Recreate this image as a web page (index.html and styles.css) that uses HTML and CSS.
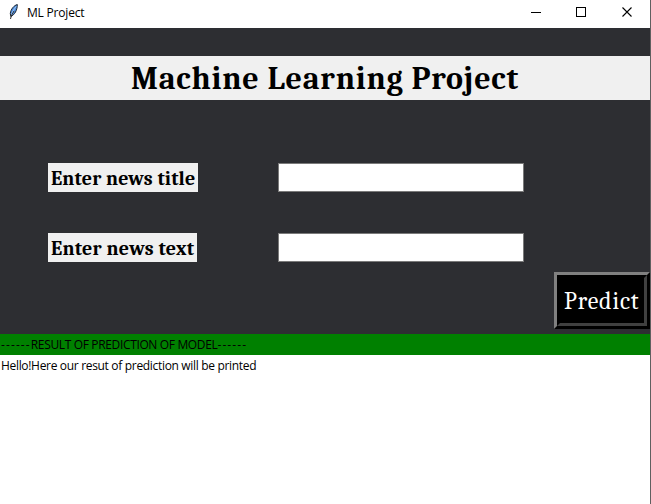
FILE: index.html
```html
<!DOCTYPE html>
<html lang="en">
<head>
<meta charset="utf-8">
<title>ML Project</title>
<link rel="stylesheet" href="styles.css">
</head>
<body>
<div class="window">
  <header class="titlebar">
    <svg class="feather" width="12" height="16" viewBox="0 0 12 16">
      <path d="M9.300 .5C6 1.500 2.800 5 2.300 9.500L2.800 12.500C6.500 11 9.500 6 9.300 .5Z" fill="#4f8fdf" stroke="#1d2733"/>
      <path d="M8 2.500C6 5 4.500 8 3.500 11" fill="none" stroke="#a9cdf5"/>
      <path d="M6 7C4.500 9.500 3 12 2.500 15" fill="none" stroke="#303030"/>
    </svg>
    <span class="caption">ML Project</span>
    <svg class="controls" width="137" height="28" viewBox="0 0 137 28" fill="none" stroke="#000" shape-rendering="crispEdges">
      <path d="M18 12.500h10"/>
      <rect x="63.500" y="7.500" width="9" height="9"/>
      <path d="M109.500 7.500l9 9M118.500 7.500l-9 9" shape-rendering="auto" stroke-width="1.100"/>
    </svg>
  </header>
  <main class="panel">
    <h1 class="heading">Machine Learning Project</h1>
    <div class="row">
      <label class="label label-title" for="t1">Enter news title</label>
      <input class="entry" id="t1" type="text">
    </div>
    <div class="row">
      <label class="label label-text" for="t2">Enter news text</label>
      <input class="entry" id="t2" type="text">
    </div>
    <button class="predict"><span class="predict-face">Predict</span></button>
  </main>
  <div class="result-title"><span class="dashes">------</span><span class="result-name">RESULT OF PREDICTION OF MODEL</span><span class="dashes">------</span></div>
  <div class="result-text">Hello!Here our resut of prediction will be printed</div>
</div>
</body>
</html>
```
FILE: styles.css
```css
* { box-sizing: border-box; }
body { margin: 0; background: #fff; font-family: "Open Sans", "Noto Sans", sans-serif; font-size: 12px; color: #000; }
.window { width: 651px; height: 504px; border-right: 1px solid #606060; overflow: hidden; white-space: nowrap; }
.titlebar { height: 28px; display: flex; align-items: flex-start; padding-left: 8px; }
.feather { margin-top: 4px; }
.caption { margin-left: 7px; line-height: 25px; flex: 1; letter-spacing: -0.2px; }
.controls { flex: none; margin-right: 0; }
.panel { height: 306px; background: #2d2e32; padding-top: 28px; font-family: Cambria, Caladea, "Noto Serif", "Droid Serif", "DejaVu Serif Condensed", "DejaVu Serif", serif; display: flex; flex-direction: column; }
.heading { margin: 0 0 63px; height: 44px; background: #f0f0f0; text-align: center; font-size: 32px; line-height: 46px; font-weight: bold; letter-spacing: 0.8px; }
.row { display: flex; height: 29px; margin: 0 0 41px 48px; }
.label { height: 29px; background: #f0f0f0; font-size: 20px; font-weight: bold; line-height: 31px; padding-left: 3px; }
.label-title { width: 150px; margin-right: 80px; letter-spacing: 0.15px; }
.label-text { width: 149px; margin-right: 81px; letter-spacing: 0.25px; }
.entry { width: 246px; height: 29px; border: 1px solid #7a7a7a; padding: 0; background: #fff; border-radius: 0; }
.row + .row { margin-bottom: 10px; }
.predict { align-self: flex-end; width: 96px; height: 57px; padding: 0; border: 3px solid; border-color: #808080 #000 #000 #808080; background: #000; font-family: inherit; }
.predict-face { display: block; height: 51px; border: 3px solid; border-color: #000 #404040 #404040 #000; color: #fff; font-size: 24px; line-height: 47px; text-align: left; padding-left: 4px; letter-spacing: 0.85px; }
.result-title { height: 21px; background: #008000; line-height: 22px; padding-left: 1px; }
.dashes { letter-spacing: 1.1px; }
.result-name { letter-spacing: -0.35px; }
.result-text { line-height: 22px; padding-left: 1px; letter-spacing: -0.32px; }
```
